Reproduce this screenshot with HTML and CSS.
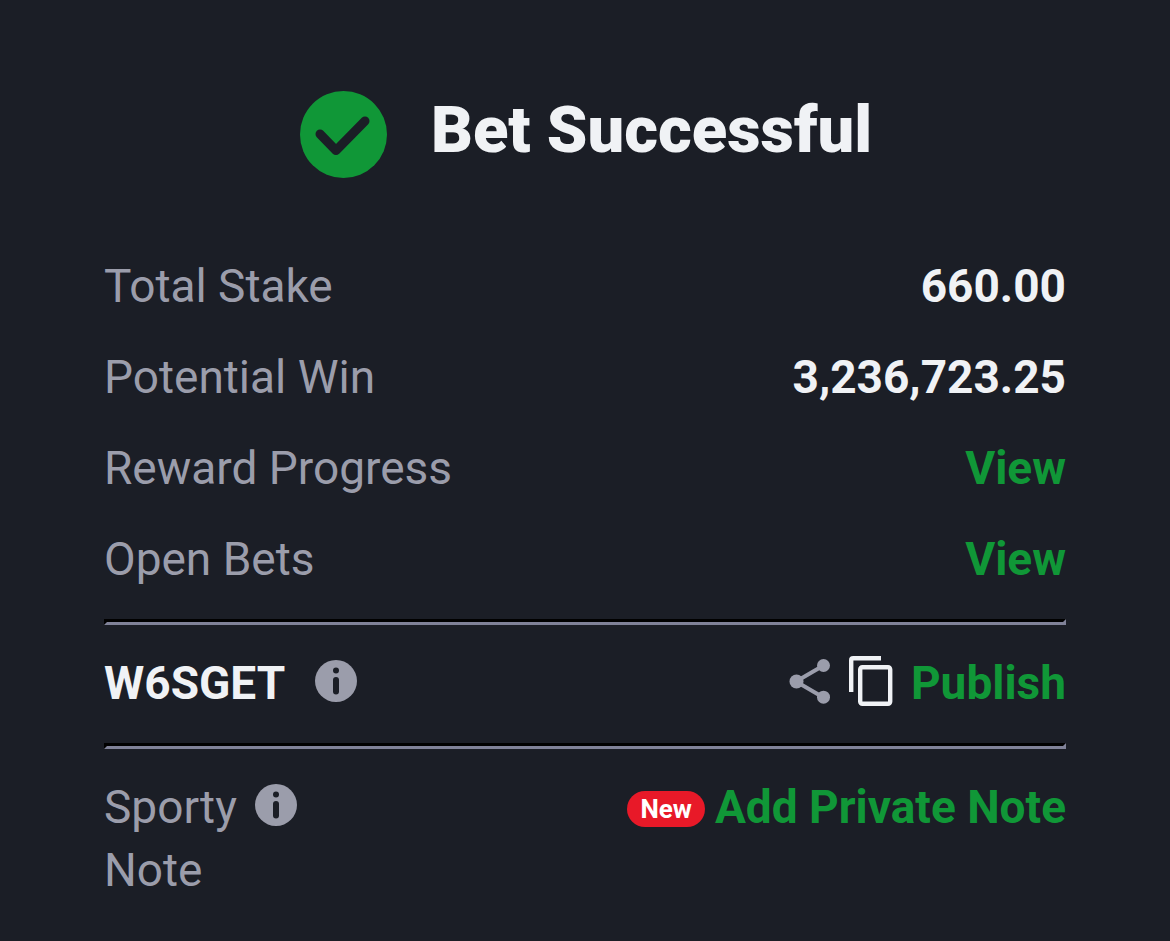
FILE: index.html
```html
<!DOCTYPE html>
<html lang="en">
<head>
<meta charset="utf-8">
<meta name="viewport" content="width=device-width, initial-scale=1">
<title>Bet Successful</title>
<link rel="stylesheet" href="styles.css">
</head>
<body>
<main class="receipt">
  <header class="heading">
    <svg class="check" viewBox="0 0 87 87" aria-hidden="true"><circle cx="43.5" cy="43.5" r="43.5" fill="#109737"/><path d="M20 43l16 16.5L65 30" fill="none" stroke="#1b1e26" stroke-width="9" stroke-linecap="round" stroke-linejoin="round"/></svg>
    <h1 class="title">Bet Successful</h1>
  </header>
  <dl class="summary">
    <div class="row"><dt class="label">Total Stake</dt><dd class="value">660.00</dd></div>
    <div class="row"><dt class="label">Potential Win</dt><dd class="value">3,236,723.25</dd></div>
    <div class="row"><dt class="label">Reward Progress</dt><dd class="value"><a class="link" href="#rewards">View</a></dd></div>
    <div class="row"><dt class="label">Open Bets</dt><dd class="value"><a class="link" href="#bets">View</a></dd></div>
  </dl>
  <hr class="divider">
  <section class="booking">
    <div class="code">
      <span class="value">W6SGET</span>
      <button class="icon-button" type="button" aria-label="About the booking code"><svg class="info" viewBox="0 0 42 42"><circle cx="21" cy="21" r="21" fill="#9b9dab"/><g fill="#1b1e26"><circle cx="21" cy="10.5" r="3"/><rect x="18" y="17" width="6" height="17.4" rx="3"/></g></svg></button>
    </div>
    <div class="actions">
      <button class="icon-button" type="button" aria-label="Share"><svg class="share" viewBox="0 0 41 45"><path d="M34 6.5L6.5 22.5 34 38.5" fill="none" stroke="#9b9dab" stroke-width="4"/><g fill="#9b9dab"><circle cx="34" cy="6.5" r="6.5"/><circle cx="7" cy="22.5" r="7"/><circle cx="34" cy="38.2" r="6.5"/></g></svg></button>
      <button class="icon-button" type="button" aria-label="Copy"><svg class="copy" viewBox="0 0 44 50"><g fill="none" stroke="#f0f2f5" stroke-width="4.4"><path d="M2.2 36V4.2q0-2 2-2H32"/><rect x="11.2" y="11.2" width="30" height="36.6" rx="2.2"/></g></svg></button>
      <button class="link" type="button">Publish</button>
    </div>
  </section>
  <hr class="divider">
  <section class="note">
    <div class="note-name">
      <span class="label">Sporty<br>Note</span>
      <button class="icon-button" type="button" aria-label="About notes"><svg class="info" viewBox="0 0 42 42"><circle cx="21" cy="21" r="21" fill="#9b9dab"/><g fill="#1b1e26"><circle cx="21" cy="10.5" r="3"/><rect x="18" y="17" width="6" height="17.4" rx="3"/></g></svg></button>
    </div>
    <div class="note-action"><span class="badge">New</span><button class="link" type="button">Add Private Note</button></div>
  </section>
</main>
</body>
</html>
```
FILE: styles.css
```css
* { box-sizing: border-box; }
body { margin: 0; background: #1b1e26; color: #f0f2f5; font-family: Roboto, sans-serif; font-size: 46px; line-height: 63px; }
.receipt { padding: 82px 104px 40px; }
.heading { display: flex; justify-content: center; align-items: flex-end; gap: 44px; padding-left: 2px; }
.check { width: 87px; height: 87px; display: block; }
.title { margin: 0; font-size: 65px; line-height: 96px; font-weight: 900; }
.summary { margin: 77px 0 28px; display: flex; flex-direction: column; gap: 28px; }
.row { display: flex; justify-content: space-between; }
.row dd { margin: 0; }
.label { color: #9b9dab; }
.value { font-weight: 700; }
.link, .icon-button { padding: 0; border: 0; background: none; font: inherit; cursor: pointer; }
.link { color: #109737; font-weight: 700; text-decoration: none; }
.icon-button { padding-bottom: 5px; }
.icon-button svg { display: block; }
.divider { margin: 0; border: 3px solid; border-color: #000 #808298 #808298 #000; }
.booking { display: flex; justify-content: space-between; align-items: center; padding: 27px 0 28px; }
.code { display: flex; align-items: center; gap: 30px; }
.info { width: 42px; height: 42px; }
.actions { display: flex; align-items: center; gap: 18px; }
.share { width: 42px; height: 45px; }
.copy { width: 44px; height: 50px; }
.note { display: flex; justify-content: space-between; align-items: flex-start; padding-top: 27px; }
.note-name { display: flex; gap: 18px; }
.note-name .icon-button { height: 63px; }
.note-action { display: flex; align-items: center; gap: 10px; }
.badge { margin-top: 3px; padding: 0 13px; border-radius: 18px; background: #e81928; color: #fff; font-size: 26px; line-height: 36px; font-weight: 700; }
```
